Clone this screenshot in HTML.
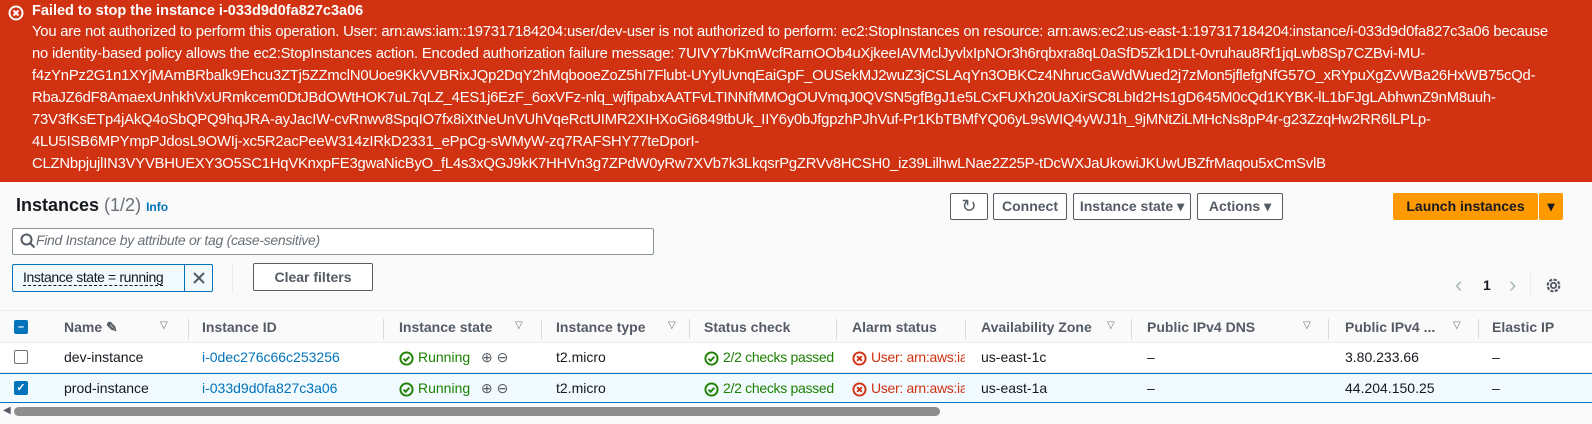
<!DOCTYPE html>
<html><head><meta charset="utf-8"><style>
*{box-sizing:border-box;margin:0;padding:0}
body{width:1592px;height:424px;overflow:hidden;background:#fff;font-family:"Liberation Sans",sans-serif;color:#16191f;position:relative}
.err{position:absolute;left:0;top:0;width:1592px;height:182px;background:#d13212;color:#fff;font-size:14.8px}
.err .t{position:absolute;left:32px;top:3px;font-weight:bold;font-size:14.5px}
.err .l{position:absolute;left:32px;white-space:nowrap;letter-spacing:-0.2px}
.main{position:absolute;left:0;top:184px;width:1592px;height:240px;background:#fafafa}
.abs{position:absolute}
.btn{position:absolute;top:193px;height:27px;border:1px solid #545b64;border-radius:2px;background:#fff;font-size:14px;font-weight:bold;color:#545b64;text-align:center;line-height:25px}
.hd{position:absolute;top:310px;height:33px;left:0;width:1592px;background:#fafafa;border-top:1px solid #eaeded;border-bottom:1px solid #eaeded}
.hd span{position:absolute;top:8px;font-weight:bold;color:#545b64;font-size:14px}
.sep{position:absolute;top:8px;width:1px;height:20px;background:#d5dbdb}
.tri{position:absolute;top:9px;font-size:10px;color:#687078}
.row{position:absolute;left:0;width:1592px;height:30px;background:#fff;border-bottom:1px solid #eaeded}
.row span{position:absolute;top:6px;font-size:14px;white-space:nowrap}
.row svg{position:absolute;top:8px}
.sel{background:#f1faff;border-top:1px solid #0073bb;border-bottom:1px solid #0073bb}
.lnk{color:#0073bb}
.grn{color:#1d8102}
.red{color:#d13212}
.cb{position:absolute;width:14px;height:14px;border:1px solid #687078;border-radius:2px;background:#fff}
.cbs{background:#0073bb;border-color:#0073bb;color:#fff;font-size:11px;line-height:12px;text-align:center;font-weight:bold}
</style></head><body>
<div class="err">
<svg class="abs" style="left:8px;top:5px" width="16" height="16" viewBox="0 0 16 16"><circle cx="8" cy="8" r="6.5" fill="none" stroke="#fff" stroke-width="2"/><path d="M5.5 5.5l5 5M10.5 5.5l-5 5" stroke="#fff" stroke-width="2"/></svg>
<div class="t">Failed to stop the instance i-033d9d0fa827c3a06</div>
<div class="l" style="top:24px">You are not authorized to perform this operation. User: arn:aws:iam::197317184204:user/dev-user is not authorized to perform: ec2:StopInstances on resource: arn:aws:ec2:us-east-1:197317184204:instance/i-033d9d0fa827c3a06 because</div>
<div class="l" style="top:46px">no identity-based policy allows the ec2:StopInstances action. Encoded authorization failure message: 7UIVY7bKmWcfRarnOOb4uXjkeeIAVMclJyvlxIpNOr3h6rqbxra8qL0aSfD5Zk1DLt-0vruhau8Rf1jqLwb8Sp7CZBvi-MU-</div>
<div class="l" style="top:68px">f4zYnPz2G1n1XYjMAmBRbalk9Ehcu3ZTj5ZZmclN0Uoe9KkVVBRixJQp2DqY2hMqbooeZoZ5hI7Flubt-UYylUvnqEaiGpF_OUSekMJ2wuZ3jCSLAqYn3OBKCz4NhrucGaWdWued2j7zMon5jflefgNfG57O_xRYpuXgZvWBa26HxWB75cQd-</div>
<div class="l" style="top:90px">RbaJZ6dF8AmaexUnhkhVxURmkcem0DtJBdOWtHOK7uL7qLZ_4ES1j6EzF_6oxVFz-nlq_wjfipabxAATFvLTINNfMMOgOUVmqJ0QVSN5gfBgJ1e5LCxFUXh20UaXirSC8LbId2Hs1gD645M0cQd1KYBK-lL1bFJgLAbhwnZ9nM8uuh-</div>
<div class="l" style="top:112px">73V3fKsETp4jAkQ4oSbQPQ9hqJRA-ayJacIW-cvRnwv8SpqIO7fx8iXtNeUnVUhVqeRctUIMR2XIHXoGi6849tbUk_IIY6y0bJfgpzhPJhVuf-Pr1KbTBMfYQ06yL9sWIQ4yWJ1h_9jMNtZiLMHcNs8pP4r-g23ZzqHw2RR6lLPLp-</div>
<div class="l" style="top:134px">4LU5ISB6MPYmpPJdosL9OWIj-xc5R2acPeeW314zIRkD2331_ePpCg-sWMyW-zq7RAFSHY77teDporI-</div>
<div class="l" style="top:156px">CLZNbpjujlIN3VYVBHUEXY3O5SC1HqVKnxpFE3gwaNicByO_fL4s3xQGJ9kK7HHVn3g7ZPdW0yRw7XVb7k3LkqsrPgZRVv8HCSH0_iz39LilhwLNae2Z25P-tDcWXJaUkowiJKUwUBZfrMaqou5xCmSvlB</div>
</div>
<div class="main"></div>
<div class="abs" style="left:16px;top:195px;font-size:18px;font-weight:bold">Instances <span style="font-weight:normal;color:#687078">(1/2)</span> <span style="font-size:12px;color:#0073bb;font-weight:bold">Info</span></div>
<div class="btn" style="left:950px;width:38px;font-size:18px;font-weight:normal">&#8635;</div>
<div class="btn" style="left:993px;width:74px">Connect</div>
<div class="btn" style="left:1073px;width:118px">Instance state ▾</div>
<div class="btn" style="left:1197px;width:86px">Actions ▾</div>
<div class="btn" style="left:1393px;width:145px;background:#ff9900;border-color:#ff9900;color:#16191f">Launch instances</div>
<div class="btn" style="left:1539px;width:24px;background:#ff9900;border-color:#ff9900;color:#16191f">▾</div>
<div class="abs" style="left:12px;top:228px;width:642px;height:27px;border:1px solid #879596;border-radius:2px;background:#fff"></div>
<svg class="abs" style="left:20px;top:233px" width="16" height="16" viewBox="0 0 16 16"><circle cx="6.5" cy="6.5" r="5" fill="none" stroke="#545b64" stroke-width="2"/><path d="M10 10l4.5 4.5" stroke="#545b64" stroke-width="2"/></svg>
<div class="abs" style="left:36px;top:232px;font-size:14px;font-style:italic;color:#687078;letter-spacing:-0.3px">Find Instance by attribute or tag (case-sensitive)</div>
<div class="abs" style="left:12px;top:264px;width:201px;height:28px;border:1px solid #0073bb;border-radius:2px;background:#f1faff"></div>
<div class="abs" style="left:184px;top:264px;width:1px;height:28px;background:#0073bb"></div>
<div class="abs" style="left:23px;top:269px;font-size:14px;border-bottom:1px dashed #16191f;letter-spacing:-0.4px;white-space:nowrap">Instance state = running</div>
<svg class="abs" style="left:192px;top:271px" width="14" height="14" viewBox="0 0 14 14"><path d="M2 2l10 10M12 2L2 12" stroke="#545b64" stroke-width="2"/></svg>
<div class="abs" style="left:232px;top:263px;width:1px;height:30px;background:#eaeded"></div>
<div class="btn" style="left:253px;top:263px;width:120px;height:28px;line-height:26px">Clear filters</div>
<div class="abs" style="left:1455px;top:272px;font-size:22px;color:#aab7b8">‹</div>
<div class="abs" style="left:1483px;top:277px;font-size:14px;font-weight:bold">1</div>
<div class="abs" style="left:1509px;top:272px;font-size:22px;color:#aab7b8">›</div>
<div class="abs" style="left:1530px;top:272px;width:1px;height:26px;background:#eaeded"></div>
<svg class="abs" style="left:1545px;top:277px" width="17" height="17" viewBox="0 0 16 16"><circle cx="8" cy="8" r="2.5" fill="none" stroke="#545b64" stroke-width="1.8"/><circle cx="8" cy="8" r="5.5" fill="none" stroke="#545b64" stroke-width="2" stroke-dasharray="3 1.3"/></svg>
<div class="hd">
<div class="cb cbs" style="left:14px;top:9px">–</div>
<span style="left:64px">Name ✎</span><div class="tri" style="left:160px">▽</div><div class="sep" style="left:188px"></div>
<span style="left:202px">Instance ID</span><div class="sep" style="left:383px"></div>
<span style="left:399px">Instance state</span><div class="tri" style="left:515px">▽</div><div class="sep" style="left:541px"></div>
<span style="left:556px">Instance type</span><div class="tri" style="left:668px">▽</div><div class="sep" style="left:689px"></div>
<span style="left:704px">Status check</span><div class="sep" style="left:836px"></div>
<span style="left:852px">Alarm status</span><div class="sep" style="left:965px"></div>
<span style="left:981px">Availability Zone</span><div class="tri" style="left:1107px">▽</div><div class="sep" style="left:1131px"></div>
<span style="left:1147px">Public IPv4 DNS</span><div class="tri" style="left:1303px">▽</div><div class="sep" style="left:1328px"></div>
<span style="left:1345px">Public IPv4 ...</span><div class="tri" style="left:1453px">▽</div><div class="sep" style="left:1478px"></div>
<span style="left:1492px">Elastic IP</span>
</div>
<div class="row" style="top:343px">
<div class="cb" style="left:14px;top:7px"></div>
<span style="left:64px">dev-instance</span><span class="lnk" style="left:202px">i-0dec276c66c253256</span>
<svg style="left:399px" width="15" height="15" viewBox="0 0 16 16"><circle cx="8" cy="8" r="6.5" fill="none" stroke="#1d8102" stroke-width="2"/><path d="M4.8 8.2l2.2 2.2 4-4.2" fill="none" stroke="#1d8102" stroke-width="2"/></svg>
<span class="grn" style="left:418px">Running</span><span style="left:481px;color:#545b64">⊕ ⊖</span>
<span style="left:556px">t2.micro</span>
<svg style="left:704px" width="15" height="15" viewBox="0 0 16 16"><circle cx="8" cy="8" r="6.5" fill="none" stroke="#1d8102" stroke-width="2"/><path d="M4.8 8.2l2.2 2.2 4-4.2" fill="none" stroke="#1d8102" stroke-width="2"/></svg>
<span class="grn" style="left:723px;letter-spacing:-0.3px">2/2 checks passed</span>
<svg style="left:852px" width="15" height="15" viewBox="0 0 16 16"><circle cx="8" cy="8" r="6.5" fill="none" stroke="#d13212" stroke-width="2"/><path d="M5.5 5.5l5 5M10.5 5.5l-5 5" stroke="#d13212" stroke-width="2"/></svg>
<span class="red" style="left:871px;width:94px;overflow:hidden;letter-spacing:-0.3px">User: arn:aws:iam</span>
<span style="left:981px">us-east-1c</span><span style="left:1147px">–</span><span style="left:1345px">3.80.233.66</span><span style="left:1492px">–</span>
</div>
<div class="row sel" style="top:373px">
<div class="cb cbs" style="left:14px;top:7px">✓</div>
<span style="left:64px">prod-instance</span><span class="lnk" style="left:202px">i-033d9d0fa827c3a06</span>
<svg style="left:399px" width="15" height="15" viewBox="0 0 16 16"><circle cx="8" cy="8" r="6.5" fill="none" stroke="#1d8102" stroke-width="2"/><path d="M4.8 8.2l2.2 2.2 4-4.2" fill="none" stroke="#1d8102" stroke-width="2"/></svg>
<span class="grn" style="left:418px">Running</span><span style="left:481px;color:#545b64">⊕ ⊖</span>
<span style="left:556px">t2.micro</span>
<svg style="left:704px" width="15" height="15" viewBox="0 0 16 16"><circle cx="8" cy="8" r="6.5" fill="none" stroke="#1d8102" stroke-width="2"/><path d="M4.8 8.2l2.2 2.2 4-4.2" fill="none" stroke="#1d8102" stroke-width="2"/></svg>
<span class="grn" style="left:723px;letter-spacing:-0.3px">2/2 checks passed</span>
<svg style="left:852px" width="15" height="15" viewBox="0 0 16 16"><circle cx="8" cy="8" r="6.5" fill="none" stroke="#d13212" stroke-width="2"/><path d="M5.5 5.5l5 5M10.5 5.5l-5 5" stroke="#d13212" stroke-width="2"/></svg>
<span class="red" style="left:871px;width:94px;overflow:hidden;letter-spacing:-0.3px">User: arn:aws:iam</span>
<span style="left:981px">us-east-1a</span><span style="left:1147px">–</span><span style="left:1345px">44.204.150.25</span><span style="left:1492px">–</span>
</div>
<div class="abs" style="left:3px;top:405px;font-size:10px;color:#545b64">◀</div>
<div class="abs" style="left:14px;top:407px;width:926px;height:9px;border-radius:5px;background:#8d8d8d"></div>
</body></html>
